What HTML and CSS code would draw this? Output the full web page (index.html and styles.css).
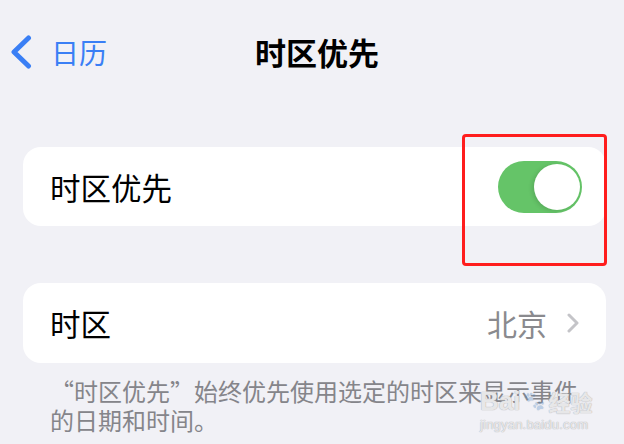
FILE: index.html
```html
<!DOCTYPE html>
<html lang="zh-CN">
<head>
<meta charset="utf-8">
<title>时区优先</title>
<link rel="stylesheet" href="styles.css">
</head>
<body>
<div class="screen">
  <header class="nav">
    <a class="back">
      <svg class="back-icon" width="22" height="34" viewBox="0 0 22 34"><path d="M18.5 3 L4 17 L18.5 31" fill="none" stroke="#3a7ff5" stroke-width="5" stroke-linecap="round" stroke-linejoin="round"/></svg>
      <span>日历</span>
    </a>
    <h1 class="title">时区优先</h1>
    <span></span>
  </header>

  <section class="card">
    <div class="row">
      <span class="label">时区优先</span>
      <span class="toggle"><span class="knob"></span></span>
    </div>
  </section>

  <section class="card card-second">
    <div class="row">
      <span class="label">时区</span>
      <span class="value">北京
        <svg class="chev" width="12" height="20" viewBox="0 0 12 20"><path d="M2 2 L10 10 L2 18" fill="none" stroke="#c4c4c8" stroke-width="3" stroke-linecap="round" stroke-linejoin="round"/></svg>
      </span>
    </div>
  </section>

  <p class="footer">“时区优先”始终优先使用选定的时区来显示事件的日期和时间。</p>

  <div class="highlight"></div>
  <div class="watermark">
    <div class="wm-top">Bai<span class="paw">🐾</span><span class="wm-cn">经验</span></div>
    <div class="wm-url">jingyan.baidu.com</div>
  </div>
</div>
</body>
</html>
```

FILE: styles.css
```css
* { box-sizing: border-box; }
html, body { margin: 0; padding: 0; }
body {
  background: #f1f1f6;
  font-family: "Noto Sans CJK SC", "Noto Sans", sans-serif;
  width: 624px;
  height: 444px;
  overflow: hidden;
}
.screen {
  position: relative;
  width: 624px;
  height: 444px;
}
.nav {
  height: 104px;
  display: grid;
  grid-template-columns: 1fr auto 1fr;
  align-items: center;
  padding: 0 0 0 10px;
}
.back {
  display: flex;
  align-items: center;
  gap: 19px;
  color: #3a7ff5;
  font-size: 28px;
  line-height: 34px;
}
.back-icon { display: block; }
.title {
  margin: 0;
  font-size: 31px;
  font-weight: 700;
  line-height: 40px;
  color: #000;
}
.card {
  margin: 43px 18px 0 23px;
  background: #fff;
  border-radius: 18px;
  height: 79px;
}
.card-second {
  margin-top: 57px;
  height: 80px;
}
.row {
  height: 100%;
  display: flex;
  align-items: center;
  justify-content: space-between;
  padding: 0 24px 0 27px;
}
.label {
  font-size: 30.5px;
  line-height: 40px;
  color: #000;
}
.toggle {
  position: relative;
  width: 84px;
  height: 52px;
  border-radius: 26px;
  background: #65c468;
}
.knob {
  position: absolute;
  right: 2px;
  top: 3px;
  width: 46px;
  height: 46px;
  border-radius: 50%;
  background: #fff;
  box-shadow: -2px 1px 4px rgba(0,0,0,0.12);
}
.card-second .row { padding-right: 27px; }
.value {
  display: flex;
  align-items: center;
  gap: 20px;
  font-size: 30px;
  line-height: 40px;
  color: #8a8a8e;
}
.chev { display: block; }
.footer {
  margin: 13px 40px 0 50px;
  font-size: 24px;
  line-height: 29px;
  color: #85858a;
}
.highlight {
  position: absolute;
  left: 462px;
  top: 134px;
  width: 145px;
  height: 132px;
  border: 3px solid #ff1d1d;
  border-radius: 4px;
}
.watermark {
  position: absolute;
  left: 480px;
  top: 386px;
  color: rgba(255,255,255,0.7);
  text-shadow: 0 0 1px #b4b4b8, 0 0 1px #b4b4b8;
  font-family: "Liberation Sans", sans-serif;
}
.wm-top {
  font-size: 26px;
  font-weight: 700;
  line-height: 30px;
  display: flex;
  align-items: center;
}
.paw { font-size: 18px; opacity: 0.3; margin: 0 3px; }
.wm-cn { font-family: "Noto Sans CJK SC", sans-serif; font-size: 22px; }
.wm-url { font-size: 13px; line-height: 18px; letter-spacing: 0.2px; }
```
